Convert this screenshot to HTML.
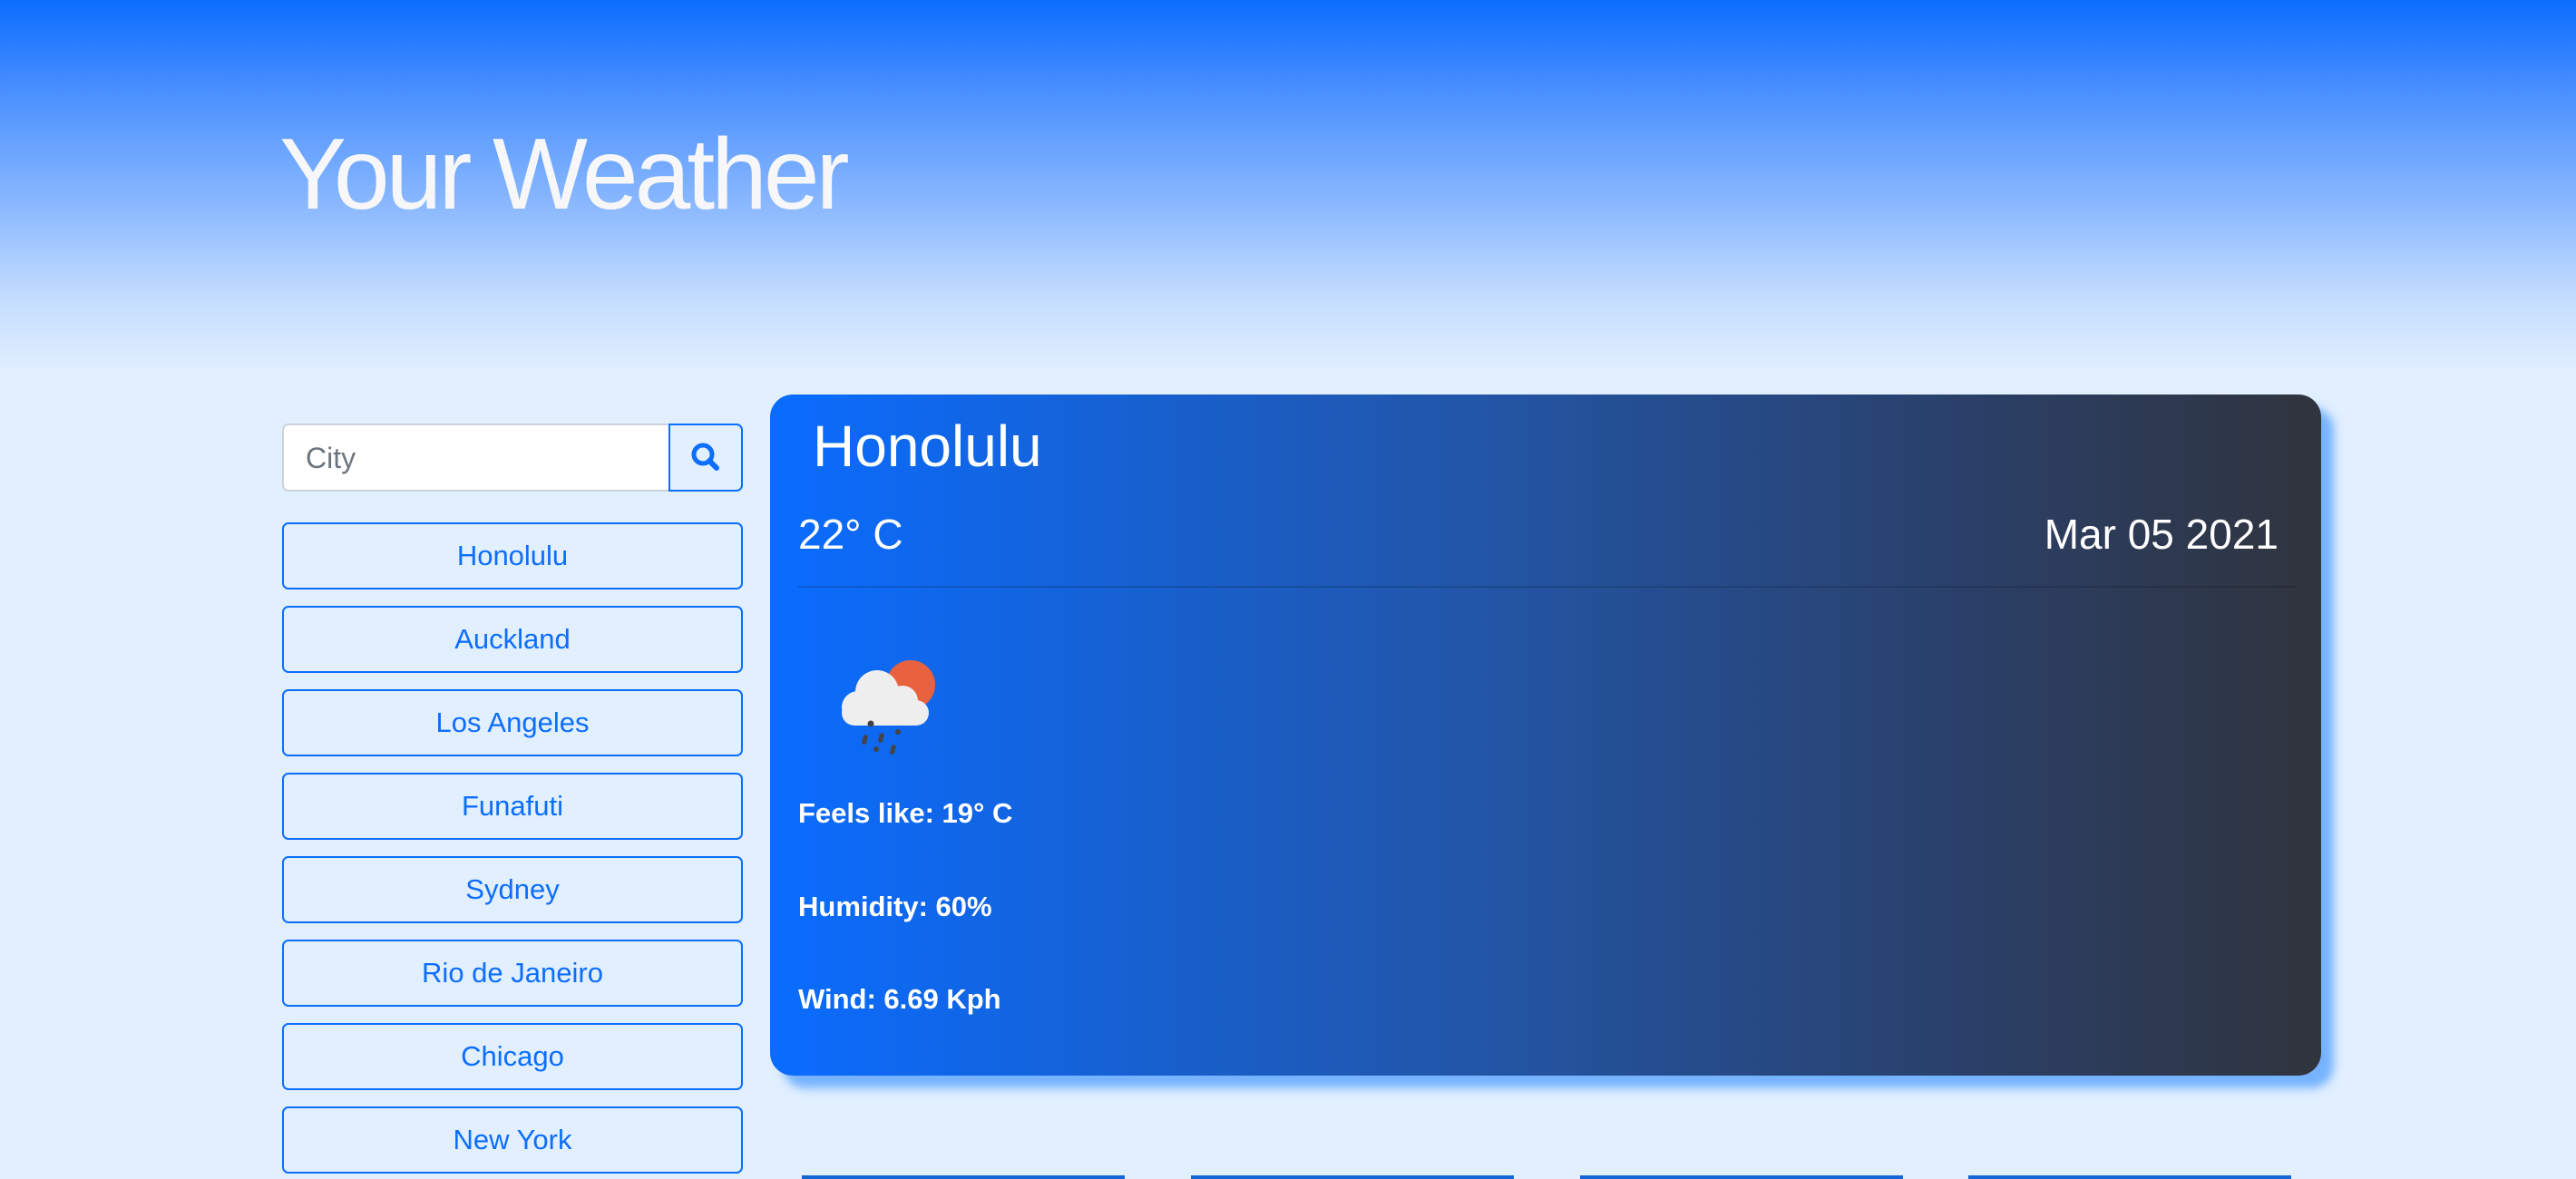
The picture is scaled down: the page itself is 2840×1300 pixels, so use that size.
<!DOCTYPE html>
<html><head><meta charset="utf-8"><style>
*{box-sizing:border-box;margin:0;padding:0}
body{width:2840px;height:1300px;overflow:hidden;background:#e1efff;font-family:"Liberation Sans",Arial,sans-serif;position:relative}
.hdr{position:absolute;left:0;top:0;width:2840px;height:410px;background:linear-gradient(#0b6dff 0%,#4a90ff 25%,#8ab8ff 55%,#c3dcff 80%,#e1efff 100%)}
h1{position:absolute;left:308px;top:128px;font-size:111px;font-weight:300;color:#f7f7f9;letter-spacing:-4px}
.inp{position:absolute;left:311px;top:467px;width:428px;height:75px;background:#fff;border:2px solid #ccd2d9;border-right:none;border-radius:7px 0 0 7px;font-size:32px;color:#6c757d;padding:18px 0 0 24px}
.sb{position:absolute;left:737px;top:467px;width:82px;height:75px;border:2px solid #0d6efd;border-radius:0 7px 7px 0}
.btn{position:absolute;left:311px;width:508px;height:74px;border:2px solid #0d6efd;border-radius:7px;color:#0d6efd;font-size:31px;text-align:center;line-height:70px}
.card{position:absolute;left:849px;top:435px;width:1710px;height:751px;border-radius:25px;background:linear-gradient(90deg,#0a6cff 0%,#2256a8 45%,#2b3e63 80%,#30343d 100%);box-shadow:14px 14px 10px #76b3ff;color:#fff}
.t{position:absolute;font-weight:bold}
.bot{position:absolute;top:1296px;height:4px;width:356px;background:#1266d8}
</style></head><body>
<div class="hdr"></div>
<h1>Your Weather</h1>
<div class="inp">City</div>
<div class="sb"><svg width="78" height="71" viewBox="0 0 78 71"><circle cx="36" cy="32" r="10" fill="none" stroke="#0d6efd" stroke-width="5"/><line x1="43" y1="39" x2="51" y2="47" stroke="#0d6efd" stroke-width="6" stroke-linecap="round"/></svg></div>
<div class="btn" style="top:576px">Honolulu</div>
<div class="btn" style="top:668px">Auckland</div>
<div class="btn" style="top:760px">Los Angeles</div>
<div class="btn" style="top:852px">Funafuti</div>
<div class="btn" style="top:944px">Sydney</div>
<div class="btn" style="top:1036px">Rio de Janeiro</div>
<div class="btn" style="top:1128px">Chicago</div>
<div class="btn" style="top:1220px">New York</div>
<div class="card">
<div class="t" style="left:47px;top:20px;font-size:64px;font-weight:normal">Honolulu</div>
<div class="t" style="left:31px;top:127px;font-size:46px;font-weight:normal">22° C</div>
<div class="t" style="right:47px;top:127px;font-size:46px;font-weight:normal">Mar 05 2021</div>
<div style="position:absolute;left:31px;top:211px;width:1652px;height:2px;background:rgba(0,0,0,0.15)"></div>
<svg style="position:absolute;left:60px;top:282px" width="140" height="140" viewBox="0 0 140 140">
<circle cx="95" cy="38" r="27" fill="#e8623f"/>
<g fill="#eeeeee"><circle cx="58" cy="46" r="24"/><circle cx="86" cy="56" r="17"/><circle cx="37" cy="63" r="18"/><rect x="19" y="55" width="96" height="28" rx="14"/></g>
<g fill="#444"><circle cx="51" cy="81" r="3.5"/><rect x="42" y="93" width="5" height="11" rx="2.5" transform="rotate(15 44 98)"/><rect x="60" y="91" width="5" height="11" rx="2.5" transform="rotate(15 62 96)"/><circle cx="81" cy="90" r="3"/><circle cx="57" cy="109" r="3"/><rect x="73" y="104" width="5" height="11" rx="2.5" transform="rotate(15 75 109)"/></g>
</svg>
<div class="t" style="left:31px;top:444px;font-size:31px">Feels like: 19° C</div>
<div class="t" style="left:31px;top:547px;font-size:31px">Humidity: 60%</div>
<div class="t" style="left:31px;top:649px;font-size:31px">Wind: 6.69 Kph</div>
</div>
<div class="bot" style="left:884px"></div>
<div class="bot" style="left:1313px"></div>
<div class="bot" style="left:1742px"></div>
<div class="bot" style="left:2170px"></div>
</body></html>
